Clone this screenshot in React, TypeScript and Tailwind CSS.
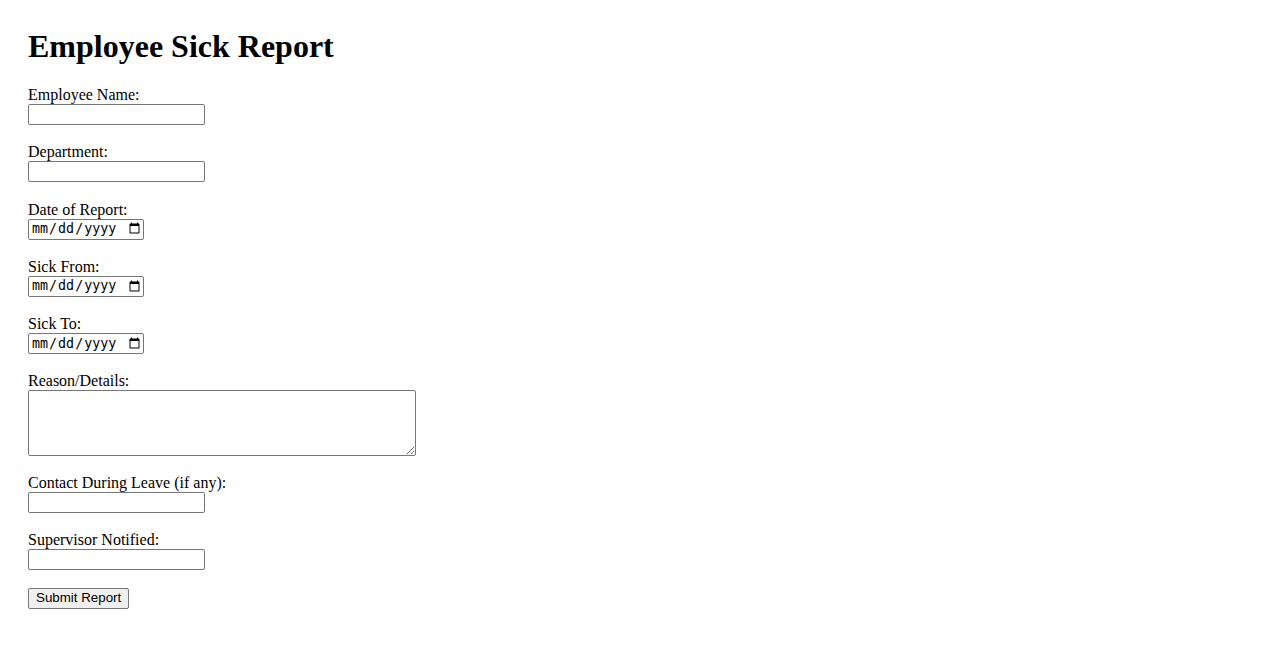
const textFields = ["Employee Name:", "Department:"] as const;
const dateFields = ["Date of Report:", "Sick From:", "Sick To:"] as const;

const inputBox =
  "block h-[21px] w-[177px] border border-[#767676] rounded-[2px] bg-white px-[2px] text-[13.33px] font-['Liberation_Sans',sans-serif]";
const dateBox =
  "block h-[21px] w-[116px] border border-[#767676] rounded-[2px] bg-white pl-[2px] text-[13.33px] font-['DejaVu_Sans_Mono',monospace]";

const Label = ({ text }: { text: string }) => (
  <label className="block leading-[18px]">{text}</label>
);

const App = () => {
  return (
    <div className="min-h-screen bg-white text-black font-['Liberation_Serif',serif] text-[16px] pt-[28px] pl-[28px]">
      <h1 className="text-[32px] font-bold leading-[37px] mb-[21px]">Employee Sick Report</h1>

      <form className="flex flex-col" onSubmit={(e) => e.preventDefault()}>
        {textFields.map((f) => (
          <div key={f} className="mb-[18.25px]">
            <Label text={f} />
            <input type="text" className={inputBox} />
          </div>
        ))}

        {dateFields.map((f) => (
          <div key={f} className="mb-[18.25px]">
            <Label text={f} />
            <input type="date" className={dateBox} />
          </div>
        ))}

        <div className="mb-[17.75px]">
          <Label text="Reason/Details:" />
          <textarea className="block h-[66px] w-[388px] border border-[#767676] rounded-[2px] bg-white" />
        </div>

        <div className="mb-[18.25px]">
          <Label text="Contact During Leave (if any):" />
          <input type="text" className={inputBox} />
        </div>

        <div className="mb-[17.5px]">
          <Label text="Supervisor Notified:" />
          <input type="text" className={inputBox} />
        </div>

        <div className="flex">
          <button
            type="submit"
            className="h-[21px] px-[7px] border border-[#767676] rounded-[2px] bg-[#efefef] text-[13.33px] leading-[16px] font-['Liberation_Sans',sans-serif]"
          >
            Submit Report
          </button>
        </div>
      </form>
    </div>
  );
};

export default App;
